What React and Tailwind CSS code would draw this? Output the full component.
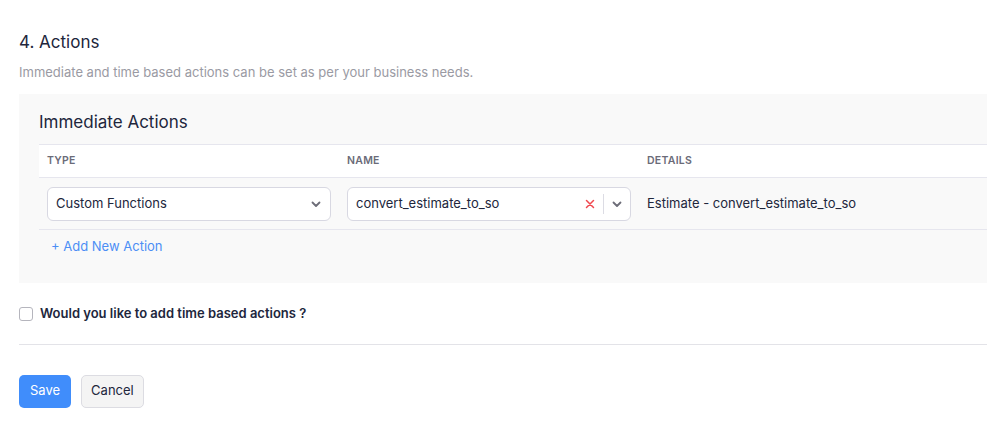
import React from "react";

function Chevron() {
  return (
    <svg width="12" height="12" viewBox="0 0 12 12" fill="none">
      <path d="M2.5 4.5 L6 8 L9.5 4.5" stroke="#6d6d78" strokeWidth="1.8" strokeLinecap="round" strokeLinejoin="round" />
    </svg>
  );
}

export default function App() {
  return (
    <div className="bg-white w-[987px] h-[425px] overflow-hidden pl-[19px] text-[#212129]" style={{ fontFamily: "Inter, 'Noto Sans', sans-serif" }}>
      <div className="pt-[30px] text-[17px] leading-6 text-[#21263c]">4. Actions</div>
      <div className="mt-[8px] text-[13px] leading-5 text-[#9a9aa3]">Immediate and time based actions can be set as per your business needs.</div>
      <div className="mt-[12px] bg-[#f9f9f9] pl-[20px] pt-[16px] pb-[27px]">
        <div className="text-[17px] leading-6 text-[#21263c]">Immediate Actions</div>
        <div className="mt-[10px] flex h-[34px] items-center bg-white border-y border-[#e6e6ee] text-[10.5px] font-semibold tracking-wide text-[#6b6b78]">
          <div className="w-[300px] px-2">TYPE</div>
          <div className="w-[300px] px-2">NAME</div>
          <div className="px-2">DETAILS</div>
        </div>
        <div className="flex h-[52px] items-center border-b border-[#e6e6ee] text-[13px]">
          <div className="w-[300px] px-2">
            <div className="flex h-[34px] w-[284px] items-center justify-between rounded-md border border-[#d8d8e2] bg-white pl-[8px] pr-[8px]">
              <span className="text-[#21263c]">Custom Functions</span>
              <Chevron />
            </div>
          </div>
          <div className="w-[300px] px-2">
            <div className="flex h-[34px] w-[284px] items-center rounded-md border border-[#d8d8e2] bg-white pl-[8px]">
              <span className="flex-1 text-[#21263c]">convert_estimate_to_so</span>
              <svg width="10" height="10" viewBox="0 0 10 10" className="mr-[8px]">
                <path d="M1.5 1.5 L8.5 8.5 M8.5 1.5 L1.5 8.5" stroke="#f0484f" strokeWidth="1.5" strokeLinecap="round" />
              </svg>
              <div className="h-[20px] w-px bg-[#dcdce4]" />
              <div className="flex w-[26px] justify-center">
                <Chevron />
              </div>
            </div>
          </div>
          <div className="px-2 text-[#21263c]">Estimate - convert_estimate_to_so</div>
        </div>
        <div className="mt-[6px] pl-[12px] text-[13px] leading-5 text-[#4c8ef5]">+ Add New Action</div>
      </div>
      <div className="mt-[21px] flex items-center">
        <div className="h-[14px] w-[14px] rounded-[3px] border border-[#b5b5bd] bg-white" />
        <span className="ml-[7px] text-[13px] font-semibold text-[#21263c]">Would you like to add time based actions ?</span>
      </div>
      <div className="mt-[20px] h-px bg-[#e3e3e8]" />
      <div className="mt-[30px] flex gap-[10px]">
        <button className="h-[33px] rounded-[5px] bg-[#408dfb] px-[11px] text-[13px] text-white">Save</button>
        <button className="h-[33px] rounded-[5px] border border-[#dcdce2] bg-[#f4f4f4] px-[9px] text-[13px] text-[#21263c]">Cancel</button>
      </div>
    </div>
  );
}
